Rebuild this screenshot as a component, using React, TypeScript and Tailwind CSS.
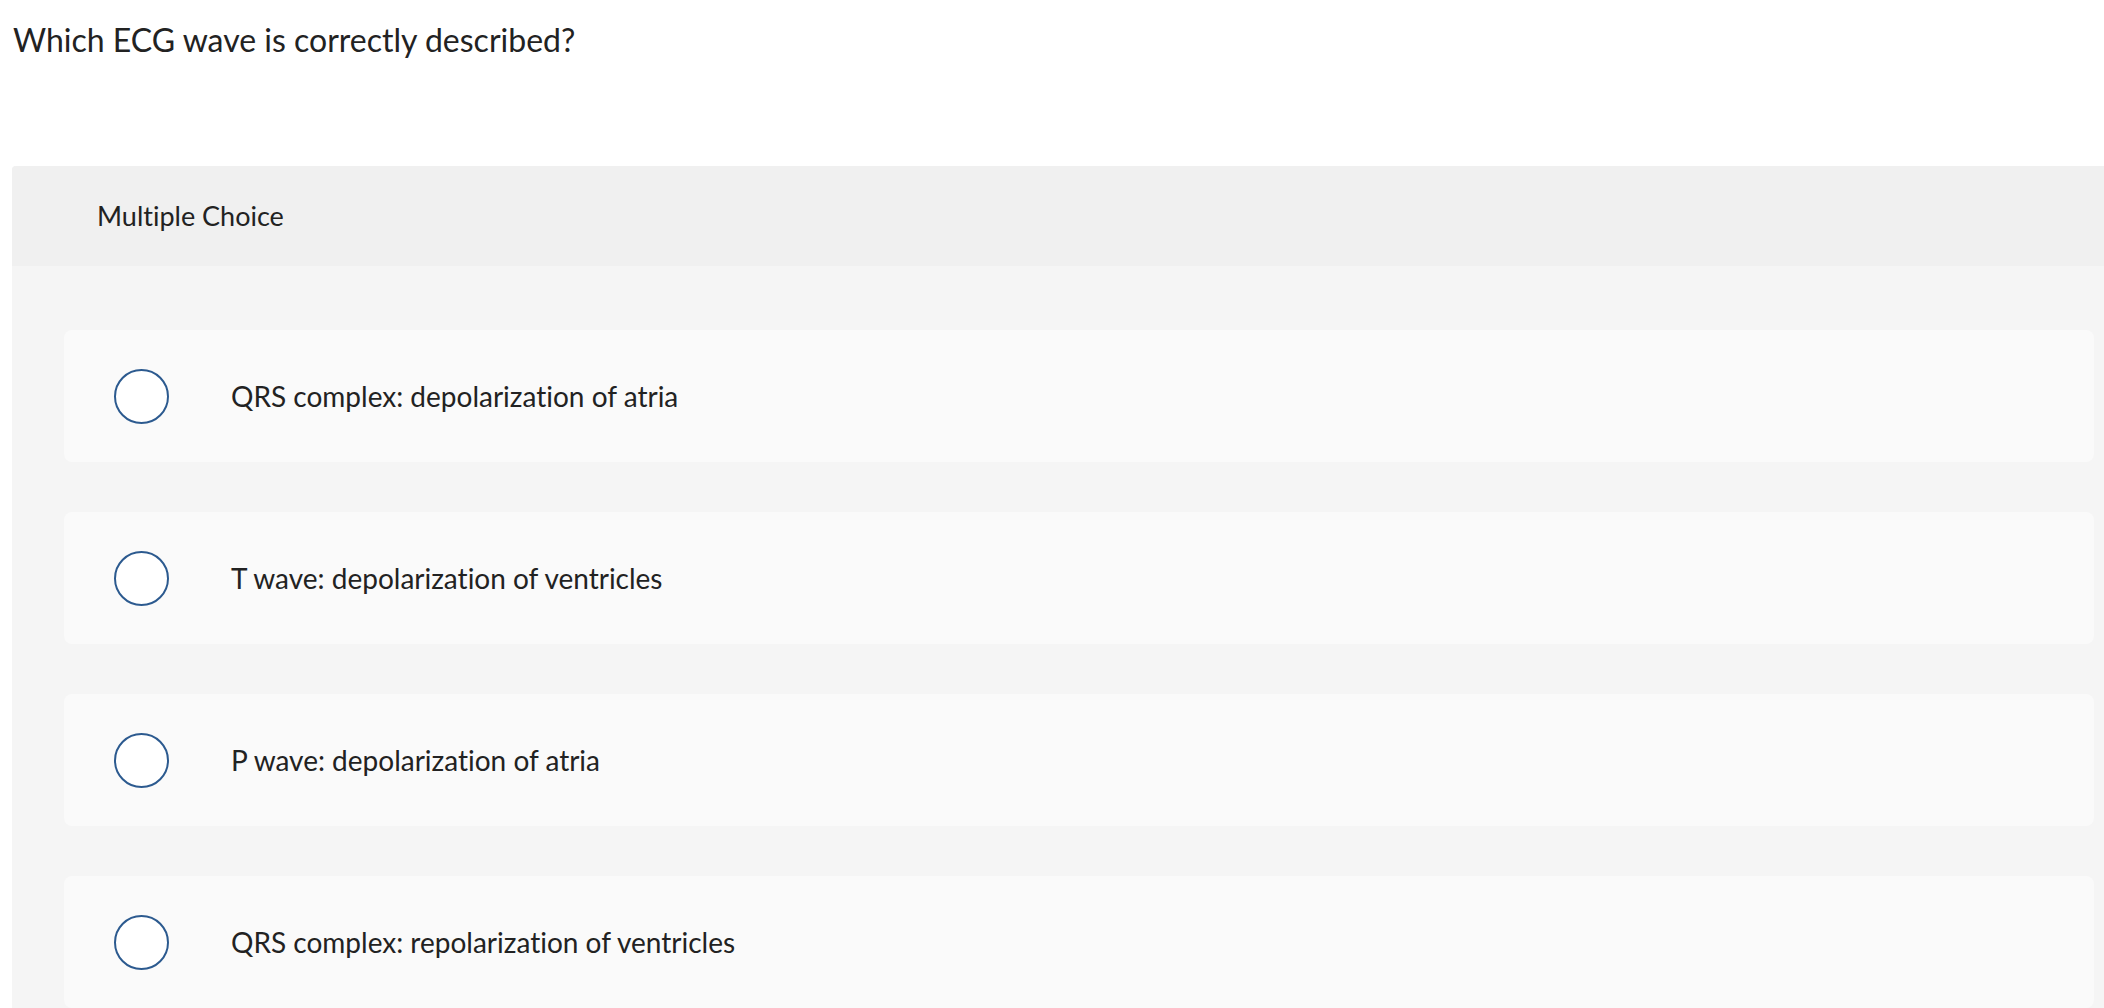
import React from "react";

const options = [
  "QRS complex: depolarization of atria",
  "T wave: depolarization of ventricles",
  "P wave: depolarization of atria",
  "QRS complex: repolarization of ventricles",
];

export default function App() {
  return (
    <div className="w-[2104px] h-[1008px] overflow-hidden bg-white text-[#222222] [font-variant-ligatures:none]" style={{ fontFamily: "Lato, 'Open Sans', sans-serif" }}>
      <div className="h-[166px] pl-[13px] pt-[21px]">
        <h1 className="text-[32px] leading-[38px] font-normal">Which ECG wave is correctly described?</h1>
      </div>
      <div className="ml-[12px] rounded-tl-[4px] bg-[#f5f5f5]">
        <div className="h-[100px] flex items-center pl-[85px] bg-[#f0f0f0] rounded-tl-[4px]">
          <span className="text-[27px]">Multiple Choice</span>
        </div>
        <div className="pl-[52px] pr-[10px] pt-[64px] flex flex-col gap-[50px]">
          {options.map((o) => (
            <label key={o} className="h-[132px] rounded-[8px] bg-[#fafafa] flex items-center pl-[50px] cursor-pointer">
              <span className="w-[55px] h-[55px] rounded-full border-2 border-[#2c5a8f] bg-white shrink-0" />
              <span className="ml-[62px] text-[28px]">{o}</span>
            </label>
          ))}
        </div>
      </div>
    </div>
  );
}
